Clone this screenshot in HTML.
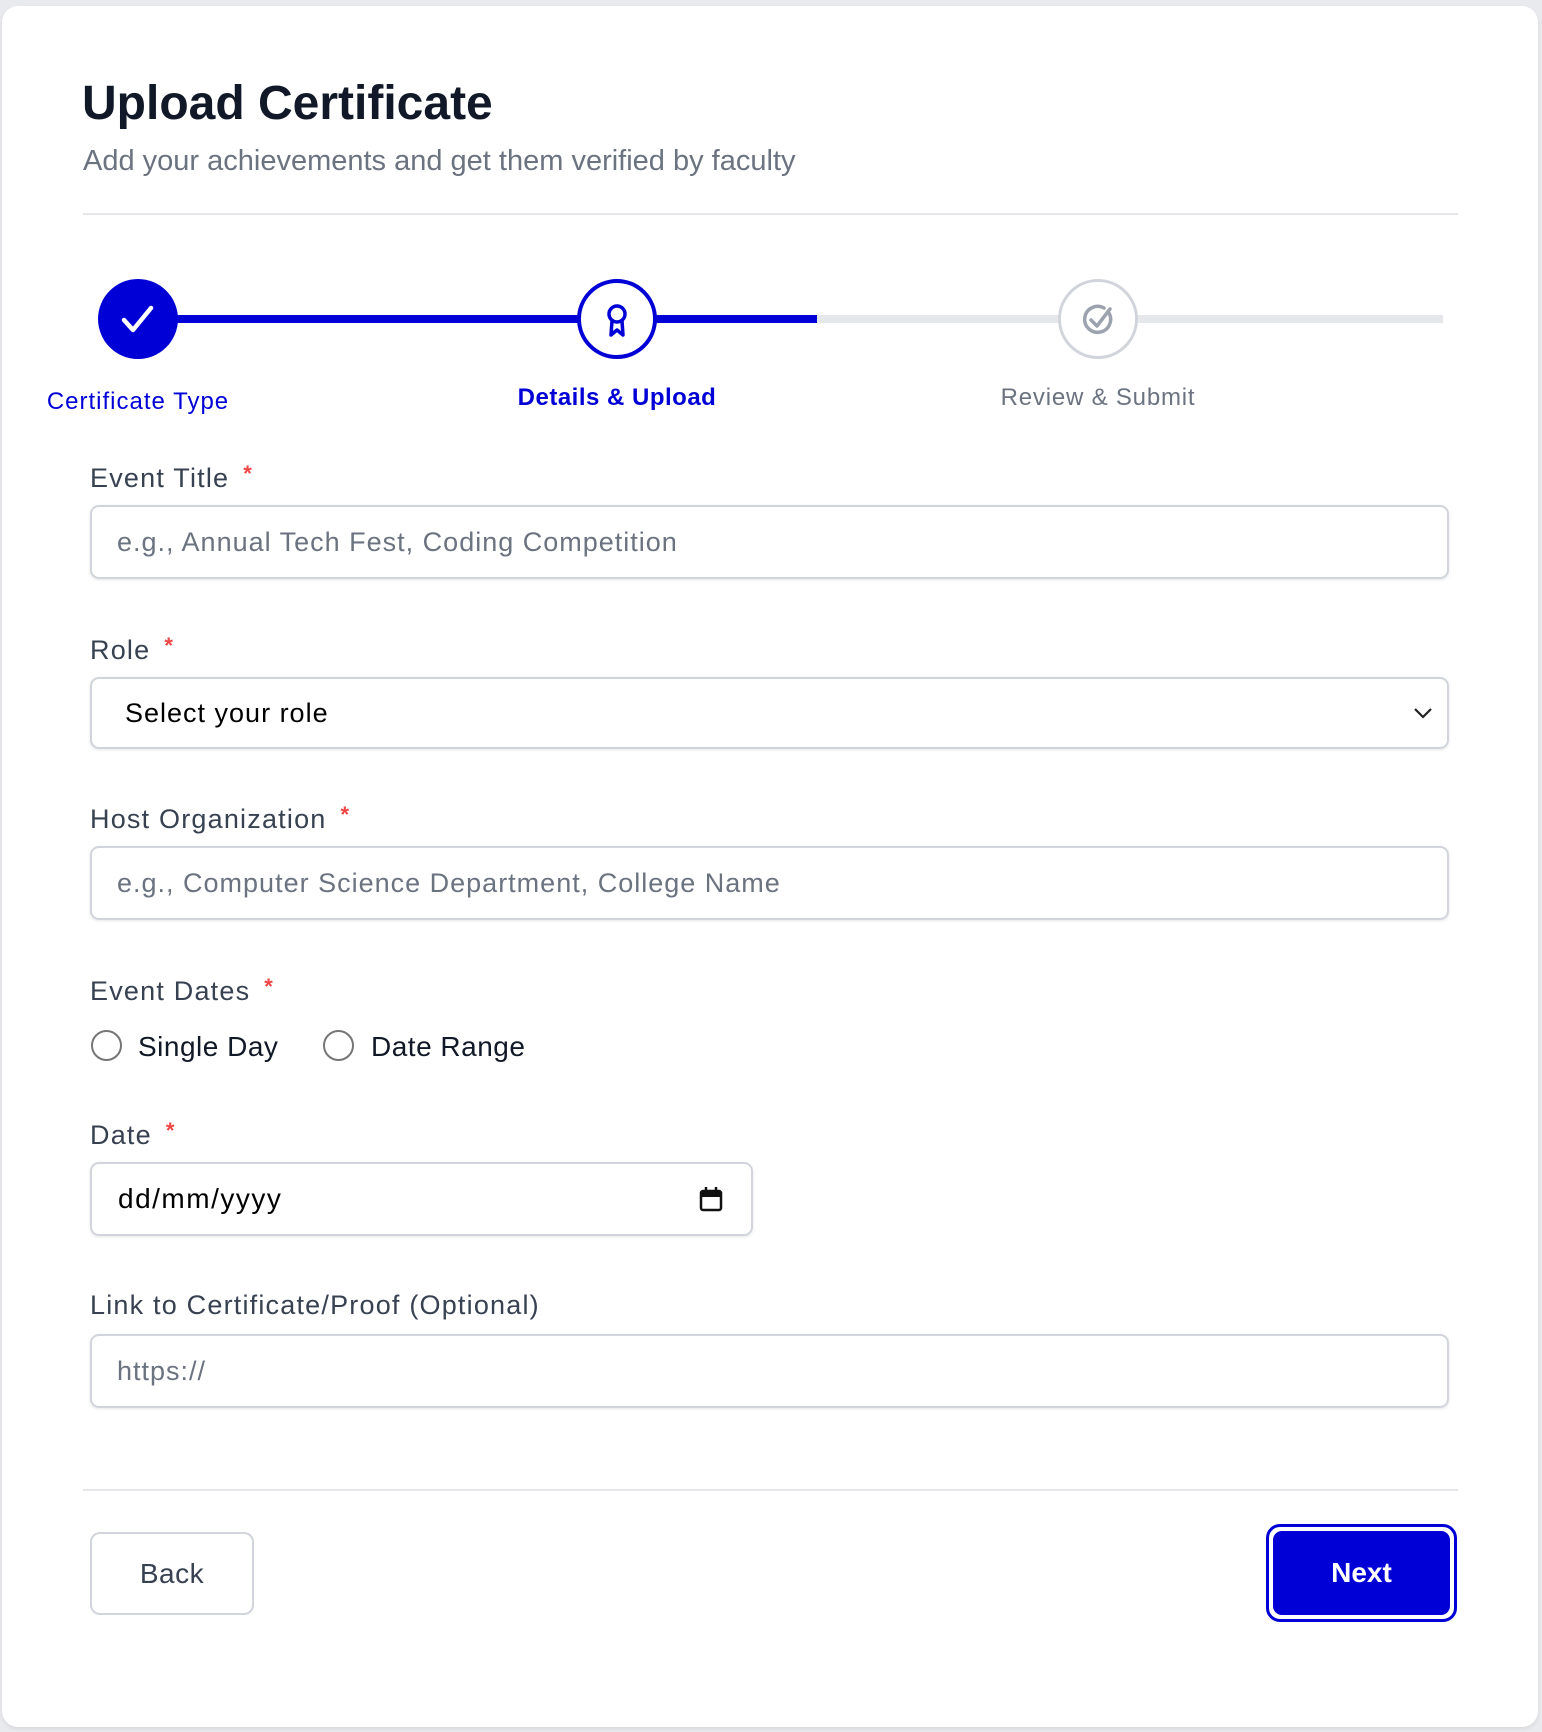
<!DOCTYPE html>
<html><head><meta charset="utf-8"><style>
*{box-sizing:border-box;margin:0;padding:0}
body{width:1542px;height:1732px;background:#e9eaed;font-family:"Liberation Sans",sans-serif;position:relative;overflow:hidden}
.card{position:absolute;left:2px;top:6px;width:1536px;height:1721px;background:#fff;border-radius:16px;box-shadow:0 2px 4px rgba(0,0,0,.08)}
.a{position:absolute;white-space:nowrap}
.lbl{font-size:27px;color:#374151;line-height:1;letter-spacing:1.2px}
.lbl b{color:#ef4444;font-weight:700;font-size:22px;margin-left:14px;vertical-align:6px}
.inp{position:absolute;left:90px;width:1359px;height:74px;border:2px solid #d1d5db;border-radius:9px;box-shadow:0 1px 3px rgba(0,0,0,.1);font-size:27px;color:#6b7280;padding-left:25px;line-height:70px;letter-spacing:1px}
.div{position:absolute;left:83px;width:1375px;height:2px;background:#e5e7eb}
.circ{position:absolute;width:80px;height:80px;border-radius:50%;background:#fff}
</style></head><body>
<div class="card"></div>
<div class="a" style="left:82px;top:76px;font-size:48px;font-weight:700;color:#111827">Upload Certificate</div>
<div class="a" style="left:83px;top:145px;font-size:29px;color:#6b7280">Add your achievements and get them verified by faculty</div>
<div class="div" style="top:213px"></div>

<div class="a" style="left:138px;top:315px;width:1305px;height:8px;background:#e5e7eb"></div>
<div class="a" style="left:138px;top:315px;width:679px;height:8px;background:#0000d6"></div>
<div class="circ" style="left:98px;top:279px;background:#0000d6"><svg width="80" height="80" viewBox="0 0 80 80"><path d="M26 41 L35 51 L53 29" stroke="#fff" stroke-width="4.5" fill="none" stroke-linecap="round" stroke-linejoin="round"/></svg></div>
<div class="circ" style="left:577px;top:279px;border:4px solid #0000d6"><svg width="72" height="72" viewBox="0 0 72 72" style="display:block"><circle cx="36" cy="31" r="8" stroke="#0000d6" stroke-width="3.5" fill="none"/><path d="M31 38 L30 52 L36 47 L42 52 L41 38" stroke="#0000d6" stroke-width="3.5" fill="none" stroke-linejoin="round"/></svg></div>
<div class="circ" style="left:1058px;top:279px;border:3px solid #d1d5db"><svg width="74" height="74" viewBox="0 0 74 74" style="display:block"><path d="M48 31 A13 13 0 1 1 43 26" stroke="#9ca3af" stroke-width="3.5" fill="none" stroke-linecap="round"/><path d="M30 38 L36 44 L49 27" stroke="#9ca3af" stroke-width="3.5" fill="none" stroke-linecap="round" stroke-linejoin="round"/></svg></div>
<div class="a" style="left:18px;width:240px;text-align:center;top:388px;font-size:24px;color:#0000d6;letter-spacing:1px">Certificate Type</div>
<div class="a" style="left:477px;width:280px;text-align:center;top:384px;font-size:24px;font-weight:700;color:#0000d6;letter-spacing:0.5px">Details &amp; Upload</div>
<div class="a" style="left:958px;width:280px;text-align:center;top:384px;font-size:24px;color:#6b7280;letter-spacing:0.8px">Review &amp; Submit</div>

<div class="a lbl" style="left:90px;top:463px">Event Title<b>*</b></div>
<div class="inp" style="top:505px">e.g., Annual Tech Fest, Coding Competition</div>
<div class="a lbl" style="left:90px;top:635px">Role<b>*</b></div>
<div class="inp" style="top:677px;height:72px;color:#000;padding-left:33px;line-height:68px">Select your role<svg style="position:absolute;right:14px;top:28px" width="20" height="12" viewBox="0 0 20 12"><path d="M2 2 L10 10 L18 2" stroke="#222" stroke-width="2.2" fill="none"/></svg></div>
<div class="a lbl" style="left:90px;top:804px">Host Organization<b>*</b></div>
<div class="inp" style="top:846px">e.g., Computer Science Department, College Name</div>
<div class="a lbl" style="left:90px;top:976px">Event Dates<b>*</b></div>
<div class="a" style="left:91px;top:1030px;width:31px;height:31px;border:2px solid #767676;border-radius:50%"></div>
<div class="a" style="left:138px;top:1031px;font-size:28px;color:#111827;letter-spacing:0.5px">Single Day</div>
<div class="a" style="left:323px;top:1030px;width:31px;height:31px;border:2px solid #767676;border-radius:50%"></div>
<div class="a" style="left:371px;top:1031px;font-size:28px;color:#111827;letter-spacing:0.5px">Date Range</div>
<div class="a lbl" style="left:90px;top:1120px">Date<b>*</b></div>
<div class="inp" style="top:1162px;width:663px;color:#000;padding-left:26px;font-size:28px;letter-spacing:1.5px">dd/mm/yyyy<svg style="position:absolute;left:607px;top:22px" width="24" height="26" viewBox="0 0 24 26"><rect x="2" y="5" width="20" height="19" rx="2" fill="none" stroke="#111" stroke-width="2.5"/><rect x="2" y="5" width="20" height="6" fill="#111"/><path d="M7 1v5M17 1v5" stroke="#111" stroke-width="2.5"/></svg></div>
<div class="a lbl" style="left:90px;top:1292px">Link to Certificate/Proof (Optional)</div>
<div class="inp" style="top:1334px">https://</div>
<div class="div" style="top:1489px"></div>
<div class="a" style="left:90px;top:1532px;width:164px;height:83px;border:2px solid #d1d5db;border-radius:10px;font-size:28px;color:#374151;text-align:center;line-height:79px;letter-spacing:0.5px">Back</div>
<div class="a" style="left:1266px;top:1524px;width:191px;height:98px;border:3px solid #0000d6;border-radius:14px;padding:4px"><div style="width:100%;height:100%;background:#0000d6;border-radius:9px;color:#fff;font-size:28px;font-weight:700;text-align:center;line-height:84px">Next</div></div>
</body></html>
